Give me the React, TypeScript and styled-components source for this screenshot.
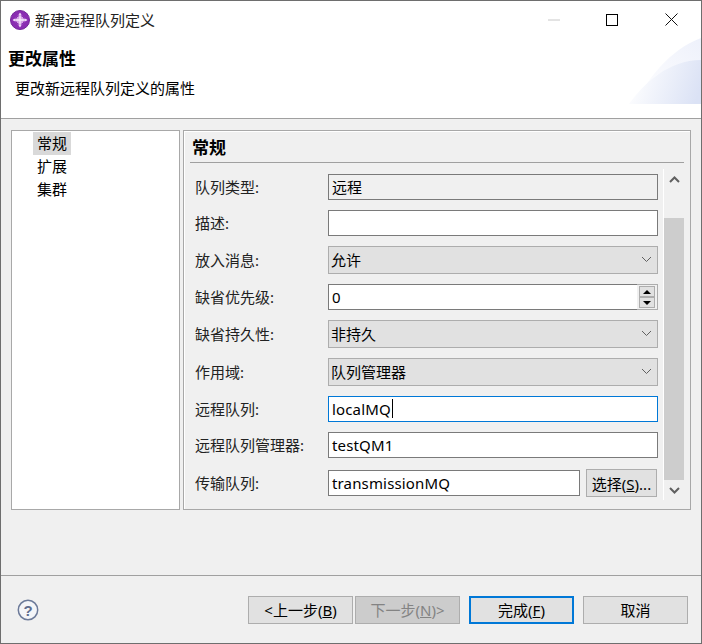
import {ReactNode} from "react";
import styled, {createGlobalStyle} from "styled-components";

const GlobalStyle = createGlobalStyle`
    html, body {
        margin: 0;
        padding: 0;
        background: #f0f0f0;
    }

    * {
        box-sizing: border-box;
    }
`;

const Win = styled.div`
    width: 702px;
    height: 644px;
    display: flex;
    flex-direction: column;
    border: 1px solid #6e6e6e;
    background: #f0f0f0;
    color: #000;
    font-family: "Noto Sans", "Noto Sans CJK SC", sans-serif;
    font-size: 15px;
`;

const TitleBar = styled.div`
    height: 37px;
    flex: none;
    display: flex;
    align-items: center;
    background: #fff;
    padding-left: 9px;
`;

const TitleText = styled.span`
    flex: 1;
    margin-left: 5px;
    line-height: 20px;
    color: #222;
`;

const WinButton = styled.div`
    width: 58px;
    height: 37px;
    display: flex;
    align-items: center;
    justify-content: center;

    &:last-child {
        width: 60px;
    }
`;

const Banner = styled.div`
    position: relative;
    height: 81px;
    flex: none;
    background: #fff;
    border-bottom: 1px solid #a0a0a0;
    padding: 10px 7px 0;
`;

const BannerArt = styled.svg`
    position: absolute;
    right: 0;
    top: 0;
`;

const BannerTitle = styled.div`
    font-size: 17px;
    font-weight: 700;
    line-height: 22px;
`;

const BannerText = styled.div`
    margin: 8px 0 0 7px;
    line-height: 20px;
`;

const Body = styled.div`
    height: 456px;
    flex: none;
    display: flex;
    gap: 3px;
    padding: 11px 10px 0;
`;

const Tree = styled.div`
    width: 169px;
    height: 380px;
    background: #fff;
    border: 1px solid #a8a8a8;
    padding: 1px 0 0 21px;
`;

const TreeItem = styled.div<{ $selected?: boolean }>`
    width: 38px;
    height: 23px;
    line-height: 23px;
    padding-left: 4px;
    white-space: nowrap;
    background: ${({$selected}) => ($selected ? "#d9d9d9" : "transparent")};
`;

const Panel = styled.div`
    width: 508px;
    height: 380px;
    border: 1px solid #a8a8a8;
    box-shadow: inset 1px 1px 0 #fff;
    padding: 0 6px 0 6px;
`;

const PanelTitle = styled.div`
    height: 32px;
    border-bottom: 1px solid #a0a0a0;
    padding: 1px 0 0 2px;
    font-size: 17px;
    font-weight: 700;
    line-height: 31px;
`;

const PanelBody = styled.div`
    display: flex;
    justify-content: space-between;
`;

const Form = styled.div`
    width: 468px;
    padding: 11px 0 0 5px;
    display: flex;
    flex-direction: column;
    gap: 10px;
`;

const Row = styled.div<{ $height: number }>`
    height: ${({$height}) => $height}px;
    display: grid;
    grid-template-columns: 133px 330px;
    align-items: center;
`;

const Label = styled.div`
    color: #222;
    line-height: 20px;
    white-space: nowrap;
`;

const Field = styled.div<{ $focused?: boolean; $readOnly?: boolean; $latin?: boolean }>`
    height: 26px;
    display: flex;
    align-items: center;
    padding: 0 0 1px 3px;
    letter-spacing: ${({$latin}) => ($latin ? "0.15px" : "0")};
    background: ${({$readOnly}) => ($readOnly ? "#f0f0f0" : "#fff")};
    border: 1px solid ${({$focused}) => ($focused ? "#0078d7" : "#7a7a7a")};
`;

const Caret = styled.span`
    width: 1px;
    height: 19px;
    margin-left: 1px;
    background: #000;
`;

const Combo = styled.div`
    height: 28px;
    display: flex;
    align-items: center;
    justify-content: space-between;
    padding: 0 5px 1px 2px;
    background: #e1e1e1;
    border: 1px solid #adadad;
`;

const Spinner = styled.div`
    height: 26px;
    display: flex;
`;

const SpinInput = styled(Field)`
    flex: 1;
    border-right: none;
`;

const SpinButtons = styled.div`
    width: 21px;
    height: 26px;
    display: flex;
    flex-direction: column;
    padding: 1px 2px;
    background: #f0f0f0;
    border: 1px solid #adadad;
    border-left: none;
`;

const SpinButton = styled.div`
    flex: 1;
    display: flex;
    align-items: center;
    justify-content: center;
    background: #e1e1e1;
    border: 1px solid #adadad;
`;

const Pair = styled.div`
    display: flex;
    align-items: center;
    justify-content: space-between;
    width: 329px;
`;

const PairField = styled(Field)`
    width: 252px;
`;

const SelectButton = styled.div`
    width: 71px;
    height: 28px;
    display: flex;
    align-items: center;
    justify-content: center;
    background: #e1e1e1;
    border: 1px solid #adadad;
    white-space: nowrap;
`;

const Scrollbar = styled.div`
    width: 21px;
    height: 331px;
    margin-top: 6px;
    display: flex;
    flex-direction: column;
    border-left: 1px solid #fff;
`;

const ScrollArrow = styled.div`
    height: 20px;
    display: flex;
    align-items: center;
    justify-content: center;
    flex: none;
`;

const Track = styled.div`
    flex: 1;
    padding-top: 29px;
    display: flex;
`;

const Thumb = styled.div`
    flex: 1;
    background: #cdcdcd;
`;

const Footer = styled.div`
    flex: 1;
    display: flex;
    align-items: center;
    border-top: 1px solid #a0a0a0;
    padding: 0 13px 0 16px;
`;

const Spacer = styled.div`
    flex: 1;
`;

const Button = styled.div<{ $primary?: boolean; $disabled?: boolean }>`
    width: 105px;
    height: 28px;
    display: flex;
    align-items: center;
    justify-content: center;
    white-space: nowrap;
    color: ${({$disabled}) => ($disabled ? "#838383" : "#000")};
    background: ${({$disabled}) => ($disabled ? "#cccccc" : "#e1e1e1")};
    border: ${({$primary}) => ($primary ? "2px solid #0078d7" : "1px solid #adadad")};
`;

const ButtonGap = styled.div<{ $width: number }>`
    width: ${({$width}) => $width}px;
`;

const AppIcon = () => (
    <svg width="20" height="20" viewBox="0 0 20 20">
        <circle cx="10" cy="10" r="9.5" fill="#8a2db2" stroke="#74269a"/>
        <path d="M10 2.5 C12 6 14 8 17.5 10 C14 12 12 14 10 17.5 C8 14 6 12 2.5 10 C6 8 8 6 10 2.5Z" fill="#d7a6e8"/>
        <circle cx="10" cy="10" r="4.4" fill="none" stroke="#8a2db2" strokeWidth="1"/>
        <path d="M10 3.5v13M3.5 10h13" stroke="#f7ecfb" strokeWidth="1.3"/>
    </svg>
);

const Chevron = ({up, bold}: { up?: boolean; bold?: boolean }) => (
    <svg width="11" height="7" viewBox="0 0 11 7">
        <path
            d={up ? "M1 6 L5.5 1.5 L10 6" : "M1 1 L5.5 5.5 L10 1"}
            fill="none"
            stroke="#606060"
            strokeWidth={bold ? 2 : 1}
        />
    </svg>
);

const Triangle = ({up}: { up?: boolean }) => (
    <svg width="8" height="4" viewBox="0 0 8 4">
        <path d={up ? "M0 4 L4 0 L8 4Z" : "M0 0 L4 4 L8 0Z"} fill="#000"/>
    </svg>
);

const HelpIcon = () => (
    <svg width="22" height="22" viewBox="0 0 22 22">
        <circle cx="11" cy="11" r="9.7" fill="#f4f5f8" stroke="#6c7a99" strokeWidth="1.5"/>
        <text
            x="11"
            y="16.5"
            textAnchor="middle"
            fontFamily="Liberation Sans, sans-serif"
            fontSize="15"
            fontWeight="700"
            fill="#5f6d8e"
        >?</text>
    </svg>
);

const FormRow = ({label, height = 26, children}: { label: string; height?: number; children: ReactNode }) => (
    <Row $height={height}>
        <Label>{label}</Label>
        {children}
    </Row>
);

const App = () => {
    return (
        <Win>
            <GlobalStyle/>
            <TitleBar>
                <AppIcon/>
                <TitleText>新建远程队列定义</TitleText>
                <WinButton>
                    <svg width="12" height="2" viewBox="0 0 12 2">
                        <path d="M0 1h12" stroke="#c8c8c8"/>
                    </svg>
                </WinButton>
                <WinButton>
                    <svg width="12" height="12" viewBox="0 0 12 12">
                        <rect x="0.5" y="0.5" width="11" height="11" fill="none" stroke="#000"/>
                    </svg>
                </WinButton>
                <WinButton>
                    <svg width="13" height="13" viewBox="0 0 13 13">
                        <path d="M0.5 0.5l12 12M12.5 0.5l-12 12" stroke="#111"/>
                    </svg>
                </WinButton>
            </TitleBar>
            <Banner>
                <BannerArt width="72" height="66" viewBox="0 0 72 66">
                    <defs>
                        <linearGradient id="arc" x1="0" x2="1" y1="0.4" y2="0.6">
                            <stop offset="0" stopColor="#ffffff"/>
                            <stop offset="1" stopColor="#dbe2f5"/>
                        </linearGradient>
                        <linearGradient id="arcTop" x1="0" x2="1" y1="1" y2="0">
                            <stop offset="0" stopColor="#ffffff"/>
                            <stop offset="1" stopColor="#eef1fb"/>
                        </linearGradient>
                    </defs>
                    <path d="M5 66 C20 40 40 12 72 0 V66Z" fill="url(#arcTop)"/>
                    <path d="M0 66 C15 45 40 22 72 22 V66Z" fill="url(#arc)"/>
                </BannerArt>
                <BannerTitle>更改属性</BannerTitle>
                <BannerText>更改新远程队列定义的属性</BannerText>
            </Banner>
            <Body>
                <Tree>
                    <TreeItem $selected>常规</TreeItem>
                    <TreeItem>扩展</TreeItem>
                    <TreeItem>集群</TreeItem>
                </Tree>
                <Panel>
                    <PanelTitle>常规</PanelTitle>
                    <PanelBody>
                        <Form>
                            <FormRow label="队列类型:">
                                <Field $readOnly>远程</Field>
                            </FormRow>
                            <FormRow label="描述:">
                                <Field/>
                            </FormRow>
                            <FormRow label="放入消息:" height={28}>
                                <Combo>允许<Chevron/></Combo>
                            </FormRow>
                            <FormRow label="缺省优先级:">
                                <Spinner>
                                    <SpinInput>0</SpinInput>
                                    <SpinButtons>
                                        <SpinButton><Triangle up/></SpinButton>
                                        <SpinButton><Triangle/></SpinButton>
                                    </SpinButtons>
                                </Spinner>
                            </FormRow>
                            <FormRow label="缺省持久性:" height={28}>
                                <Combo>非持久<Chevron/></Combo>
                            </FormRow>
                            <FormRow label="作用域:" height={28}>
                                <Combo>队列管理器<Chevron/></Combo>
                            </FormRow>
                            <FormRow label="远程队列:">
                                <Field $focused $latin>localMQ<Caret/></Field>
                            </FormRow>
                            <FormRow label="远程队列管理器:">
                                <Field $latin>testQM1</Field>
                            </FormRow>
                            <FormRow label="传输队列:" height={30}>
                                <Pair>
                                    <PairField $latin>transmissionMQ</PairField>
                                    <SelectButton><span>选择(<u>S</u>)...</span></SelectButton>
                                </Pair>
                            </FormRow>
                        </Form>
                        <Scrollbar>
                            <ScrollArrow><Chevron up bold/></ScrollArrow>
                            <Track><Thumb/></Track>
                            <ScrollArrow><Chevron bold/></ScrollArrow>
                        </Scrollbar>
                    </PanelBody>
                </Panel>
            </Body>
            <Footer>
                <HelpIcon/>
                <Spacer/>
                <Button><span>&lt;上一步(<u>B</u>)</span></Button>
                <ButtonGap $width={2}/>
                <Button $disabled><span>下一步(<u>N</u>)&gt;</span></Button>
                <ButtonGap $width={9}/>
                <Button $primary><span>完成(<u>F</u>)</span></Button>
                <ButtonGap $width={9}/>
                <Button>取消</Button>
            </Footer>
        </Win>
    );
};

export default App;
